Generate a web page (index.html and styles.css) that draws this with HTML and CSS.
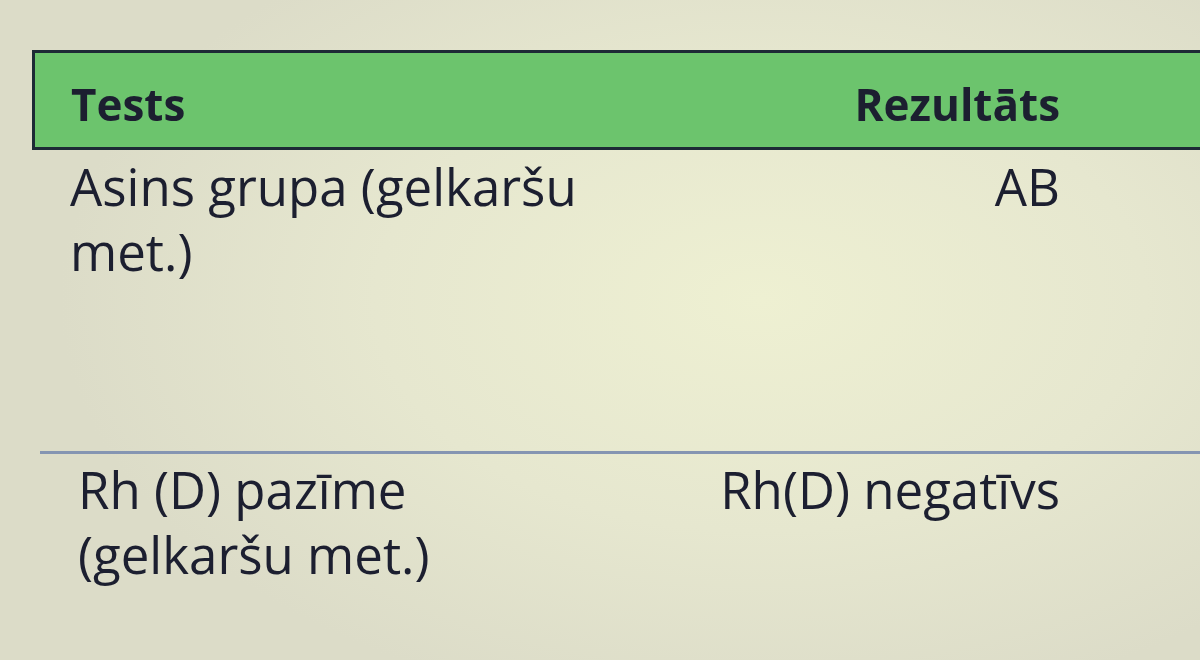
FILE: index.html
```html
<!DOCTYPE html>
<html lang="lv">
<head>
<meta charset="utf-8">
<title>Tests</title>
<link rel="stylesheet" href="styles.css">
</head>
<body>
<div class="screen">
  <div class="table">
    <div class="head">
      <div class="cell name">Tests</div>
      <div class="cell result">Rezultāts</div>
    </div>
    <div class="row first">
      <div class="cell name">Asins grupa (gelkaršu<br>met.)</div>
      <div class="cell result">AB</div>
    </div>
    <div class="row second">
      <div class="cell name">Rh (D) pazīme<br>(gelkaršu met.)</div>
      <div class="cell result">Rh(D) negatīvs</div>
    </div>
  </div>
</div>
</body>
</html>
```
FILE: styles.css
```css
html, body {
  margin: 0;
  padding: 0;
  width: 1200px;
  height: 660px;
  overflow: hidden;
}
body {
  background: radial-gradient(ellipse 700px 420px at 760px 300px, #eef0d2 0%, #e6e7cf 55%, #dcdcc8 100%);
  font-family: "Open Sans", Lato, "Liberation Sans", sans-serif;
  color: #1c1f30;
}
.screen {
  padding-top: 50px;
  padding-left: 32px;
}
.table {
  width: 1200px;
}
.head {
  display: grid;
  grid-template-columns: 1fr auto;
  align-items: end;
  height: 100px;
  box-sizing: border-box;
  background: #6cc46d;
  border: 3px solid #1d2a36;
  border-right: none;
  padding: 0 172px 13px 36px;
  font-weight: 700;
  font-size: 44px;
  line-height: 60px;
}
.row {
  display: grid;
  grid-template-columns: 1fr auto;
  align-items: start;
  box-sizing: border-box;
  font-size: 51px;
  line-height: 65px;
}
.row.first {
  height: 304px;
  border-bottom: 3px solid #8595b2;
  margin-left: 8px;
  padding: 4px 172px 0 30px;
}
.row.second {
  padding: 3px 172px 0 46px;
}
.cell.result {
  text-align: right;
}
.cell {
  filter: blur(0.5px);
}
```
